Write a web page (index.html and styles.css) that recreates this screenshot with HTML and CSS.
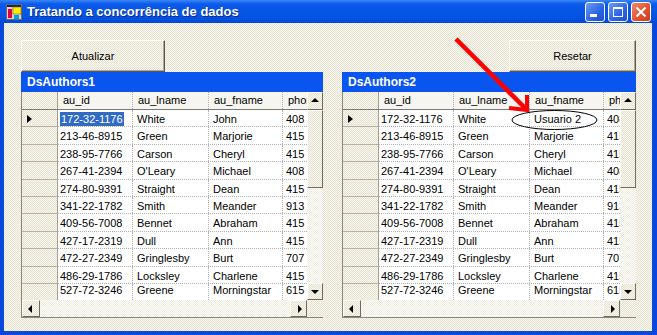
FILE: index.html
```html
<!DOCTYPE html>
<html lang="pt">
<head>
    <meta charset="UTF-8">
    <title>Tratando a concorrência de dados</title>
    <link rel="stylesheet" href="styles.css">
</head>
<body>
<div class="window">
    <!-- Barra de título -->
    <div class="titlebar">
        <svg class="app-icon" width="16" height="16" viewBox="0 0 16 16">
            <rect x="0.5" y="0.5" width="15" height="15" fill="#d8d4c8" stroke="#6b6b6b"/>
            <rect x="1" y="1" width="14" height="2" fill="#0a246a"/>
            <rect x="2" y="5" width="4" height="9" fill="#e0004a"/>
            <rect x="7" y="3" width="8" height="7" fill="#ffee00" stroke="#806000" stroke-width="0.6"/>
            <rect x="8" y="11" width="5" height="4" fill="#00a0e8"/>
        </svg>
        <span class="title">Tratando a concorrência de dados</span>
        <div class="caption-buttons">
            <span class="cap-btn">
                <svg width="20" height="20" viewBox="0 0 20 20"><rect x="5" y="12" width="7" height="3" fill="#fff"/></svg>
            </span>
            <span class="cap-btn">
                <svg width="20" height="20" viewBox="0 0 20 20"><rect x="5.5" y="5.5" width="9" height="9" fill="none" stroke="#fff"/><rect x="5" y="5" width="10" height="2" fill="#fff"/></svg>
            </span>
            <span class="cap-btn cap-close">
                <svg width="20" height="20" viewBox="0 0 20 20"><path d="M5.5 5.5 L14.5 14.5 M14.5 5.5 L5.5 14.5" stroke="#fff" stroke-width="2"/></svg>
            </span>
        </div>
    </div>

    <div class="client">
        <div class="toolbar">
            <button class="btn btn-update">Atualizar</button>
            <button class="btn btn-reset">Resetar</button>
        </div>

        <div class="grids">
            <!-- Primeiro DataGrid -->
            <div class="datagrid grid-left">
                <div class="grid-caption">DsAuthors1</div>
                <div class="grid-body">
                    <div class="grid-main">
                        <div class="grid-table">
                            <div class="grid-head">
                                <span class="cell c-rh"></span><span class="cell c-id">au_id</span><span class="cell c-ln">au_lname</span><span class="cell c-fn">au_fname</span><span class="cell c-ph">phone</span>
                            </div>
                            <div class="grid-rows">
                                <div class="grid-row"><span class="cell c-rh current"></span><span class="cell c-id"><span class="selected">172-32-1176</span></span><span class="cell c-ln">White</span><span class="cell c-fn">John</span><span class="cell c-ph">408</span></div>
                                <div class="grid-row"><span class="cell c-rh"></span><span class="cell c-id">213-46-8915</span><span class="cell c-ln">Green</span><span class="cell c-fn">Marjorie</span><span class="cell c-ph">415</span></div>
                                <div class="grid-row"><span class="cell c-rh"></span><span class="cell c-id">238-95-7766</span><span class="cell c-ln">Carson</span><span class="cell c-fn">Cheryl</span><span class="cell c-ph">415</span></div>
                                <div class="grid-row"><span class="cell c-rh"></span><span class="cell c-id">267-41-2394</span><span class="cell c-ln">O'Leary</span><span class="cell c-fn">Michael</span><span class="cell c-ph">408</span></div>
                                <div class="grid-row"><span class="cell c-rh"></span><span class="cell c-id">274-80-9391</span><span class="cell c-ln">Straight</span><span class="cell c-fn">Dean</span><span class="cell c-ph">415</span></div>
                                <div class="grid-row"><span class="cell c-rh"></span><span class="cell c-id">341-22-1782</span><span class="cell c-ln">Smith</span><span class="cell c-fn">Meander</span><span class="cell c-ph">913</span></div>
                                <div class="grid-row"><span class="cell c-rh"></span><span class="cell c-id">409-56-7008</span><span class="cell c-ln">Bennet</span><span class="cell c-fn">Abraham</span><span class="cell c-ph">415</span></div>
                                <div class="grid-row"><span class="cell c-rh"></span><span class="cell c-id">427-17-2319</span><span class="cell c-ln">Dull</span><span class="cell c-fn">Ann</span><span class="cell c-ph">415</span></div>
                                <div class="grid-row"><span class="cell c-rh"></span><span class="cell c-id">472-27-2349</span><span class="cell c-ln">Gringlesby</span><span class="cell c-fn">Burt</span><span class="cell c-ph">707</span></div>
                                <div class="grid-row"><span class="cell c-rh"></span><span class="cell c-id">486-29-1786</span><span class="cell c-ln">Locksley</span><span class="cell c-fn">Charlene</span><span class="cell c-ph">415</span></div>
                                <div class="grid-row"><span class="cell c-rh"></span><span class="cell c-id">527-72-3246</span><span class="cell c-ln">Greene</span><span class="cell c-fn">Morningstar</span><span class="cell c-ph">615</span></div>
                            </div>
                        </div>
                        <div class="vscroll">
                            <span class="sb-btn sb-up"></span>
                            <span class="sb-thumb"></span>
                            <span class="sb-track"></span>
                            <span class="sb-btn sb-down"></span>
                        </div>
                    </div>
                    <div class="hscroll">
                        <span class="sb-btn sb-left"></span>
                        <span class="sb-track"></span>
                        <span class="sb-btn sb-right"></span>
                        <span class="sb-corner"></span>
                    </div>
                </div>
            </div>

            <!-- Segundo DataGrid -->
            <div class="datagrid grid-right">
                <div class="grid-caption">DsAuthors2</div>
                <div class="grid-body">
                    <div class="grid-main">
                        <div class="grid-table">
                            <div class="grid-head">
                                <span class="cell c-rh"></span><span class="cell c-id">au_id</span><span class="cell c-ln">au_lname</span><span class="cell c-fn">au_fname</span><span class="cell c-ph">phone</span>
                            </div>
                            <div class="grid-rows">
                                <div class="grid-row"><span class="cell c-rh current"></span><span class="cell c-id">172-32-1176</span><span class="cell c-ln">White</span><span class="cell c-fn">Usuario 2</span><span class="cell c-ph">408</span></div>
                                <div class="grid-row"><span class="cell c-rh"></span><span class="cell c-id">213-46-8915</span><span class="cell c-ln">Green</span><span class="cell c-fn">Marjorie</span><span class="cell c-ph">415</span></div>
                                <div class="grid-row"><span class="cell c-rh"></span><span class="cell c-id">238-95-7766</span><span class="cell c-ln">Carson</span><span class="cell c-fn">Cheryl</span><span class="cell c-ph">415</span></div>
                                <div class="grid-row"><span class="cell c-rh"></span><span class="cell c-id">267-41-2394</span><span class="cell c-ln">O'Leary</span><span class="cell c-fn">Michael</span><span class="cell c-ph">408</span></div>
                                <div class="grid-row"><span class="cell c-rh"></span><span class="cell c-id">274-80-9391</span><span class="cell c-ln">Straight</span><span class="cell c-fn">Dean</span><span class="cell c-ph">415</span></div>
                                <div class="grid-row"><span class="cell c-rh"></span><span class="cell c-id">341-22-1782</span><span class="cell c-ln">Smith</span><span class="cell c-fn">Meander</span><span class="cell c-ph">913</span></div>
                                <div class="grid-row"><span class="cell c-rh"></span><span class="cell c-id">409-56-7008</span><span class="cell c-ln">Bennet</span><span class="cell c-fn">Abraham</span><span class="cell c-ph">415</span></div>
                                <div class="grid-row"><span class="cell c-rh"></span><span class="cell c-id">427-17-2319</span><span class="cell c-ln">Dull</span><span class="cell c-fn">Ann</span><span class="cell c-ph">415</span></div>
                                <div class="grid-row"><span class="cell c-rh"></span><span class="cell c-id">472-27-2349</span><span class="cell c-ln">Gringlesby</span><span class="cell c-fn">Burt</span><span class="cell c-ph">707</span></div>
                                <div class="grid-row"><span class="cell c-rh"></span><span class="cell c-id">486-29-1786</span><span class="cell c-ln">Locksley</span><span class="cell c-fn">Charlene</span><span class="cell c-ph">415</span></div>
                                <div class="grid-row"><span class="cell c-rh"></span><span class="cell c-id">527-72-3246</span><span class="cell c-ln">Greene</span><span class="cell c-fn">Morningstar</span><span class="cell c-ph">615</span></div>
                            </div>
                        </div>
                        <div class="vscroll">
                            <span class="sb-btn sb-up"></span>
                            <span class="sb-thumb"></span>
                            <span class="sb-track"></span>
                            <span class="sb-btn sb-down"></span>
                        </div>
                    </div>
                    <div class="hscroll">
                        <span class="sb-btn sb-left"></span>
                        <span class="sb-track"></span>
                        <span class="sb-btn sb-right"></span>
                        <span class="sb-corner"></span>
                    </div>
                </div>
            </div>
        </div>
    </div>

    <!-- Anotação: seta vermelha e elipse -->
    <svg class="annotation" width="657" height="335" viewBox="0 0 657 335">
        <line x1="456" y1="39" x2="525" y2="108" stroke="#ff0000" stroke-width="4.5"/>
        <polyline points="527,95 527,110 509,108" fill="none" stroke="#ff0000" stroke-width="4"/>
        <ellipse cx="554.5" cy="120" rx="42.5" ry="9.5" fill="none" stroke="#000" stroke-width="1"/>
    </svg>
</div>
</body>
</html>
```

FILE: styles.css
```css
body {
    margin: 0;
    font-family: "Liberation Sans", Arial, sans-serif;
    font-size: 11px;
    color: #000;
}
.window {
    position: relative;
    width: 657px;
    height: 335px;
    background-color: #0a48dc;
    display: flex;
    flex-direction: column;
    overflow: hidden;
}

/* Barra de título */
.titlebar {
    height: 23px;
    flex: none;
    display: flex;
    align-items: center;
    padding: 0 6px;
    background: linear-gradient(#3b86f5 0, #0b5ae9 4px, #0454e3 16px, #0349d8 23px);
    color: white;
}
.app-icon {
    flex: none;
}
.title {
    margin-left: 5px;
    font-size: 13px;
    font-weight: bold;
    text-shadow: 1px 1px 0 #0a2a8a;
}
.caption-buttons {
    margin-left: auto;
    display: flex;
    gap: 3px;
}
.cap-btn {
    width: 20px;
    height: 20px;
    box-sizing: border-box;
    border: 1px solid #fff;
    border-radius: 3px;
    background: linear-gradient(135deg, #6c9cf6, #2a64e6 60%, #1c4fd0);
    display: flex;
    align-items: center;
    justify-content: center;
    overflow: hidden;
}
.cap-btn svg {
    flex: none;
}
.cap-close {
    background: linear-gradient(135deg, #f0886a, #e0502e 60%, #c83c1c);
}

/* Área cliente */
.client {
    flex: 1;
    margin: 0 5px 4px 4px;
    padding: 17px 16px 0 17px;
    background: repeating-conic-gradient(#e6e2cd 0 25%, #f8f7f1 0 50%) 0 0 / 2px 2px;
}
.toolbar {
    display: flex;
    justify-content: space-between;
}
.btn {
    height: 32px;
    padding: 0;
    font-family: "Liberation Sans", Arial, sans-serif;
    font-size: 11px;
    color: #000;
    background: transparent;
    border: 1px solid;
    border-color: #fff #5c5a50 #5c5a50 #fff;
    box-shadow: inset -1px -1px 0 #aca899;
}
.btn-update {
    width: 144px;
}
.btn-reset {
    width: 127px;
}

/* DataGrids */
.grids {
    display: flex;
    gap: 19px;
}
.datagrid {
    height: 246px;
    display: flex;
    flex-direction: column;
}
.grid-left {
    width: 302px;
}
.grid-right {
    width: 294px;
}
.grid-caption {
    height: 20px;
    flex: none;
    box-sizing: border-box;
    padding: 3px 0 0 6px;
    background-color: #0a55f0;
    color: white;
    font-size: 12px;
    font-weight: bold;
}
.grid-body {
    flex: 1;
    display: flex;
    flex-direction: column;
    border-left: 1px solid #8a887c;
    border-bottom: 1px solid #8a887c;
}
.grid-main {
    display: flex;
    height: 208px;
}
.grid-table {
    flex: 1;
    min-width: 0;
    background-color: white;
}
.grid-head {
    display: flex;
    height: 17px;
    border-bottom: 1px solid #7a7a7a;
    background-color: #f6f5f0;
}
.grid-rows {
    height: 190px;
    overflow: hidden;
}
.grid-row {
    display: flex;
    height: 17.4px;
    box-sizing: border-box;
    border-bottom: 1px dotted #b2b2b2;
}
.cell {
    box-sizing: border-box;
    padding: 3px 0 0 4px;
    line-height: 13px;
    white-space: nowrap;
    overflow: hidden;
    border-right: 1px dotted #b2b2b2;
}
.grid-head .cell {
    padding: 2px 0 0 5px;
}
.grid-row:last-child .cell {
    padding-top: 0;
}
.c-rh {
    width: 36px;
    flex: none;
    position: relative;
    background: repeating-conic-gradient(#e6e2cd 0 25%, #f8f7f1 0 50%) 0 0 / 2px 2px;
    border-right: 1px solid #a3a091;
}
.grid-row .c-rh {
    border-bottom: 1px solid #b5b2a4;
    margin-bottom: -1px;
}
.c-id {
    width: 75px;
    flex: none;
}
.grid-row .c-id {
    padding-left: 2px;
}
.c-ln {
    width: 76px;
    flex: none;
}
.c-fn {
    width: 74px;
    flex: none;
}
.c-ph {
    flex: 1;
    min-width: 0;
    border-right: none;
    padding-left: 3px;
}
.selected {
    display: inline-block;
    padding: 0 1px;
    margin-top: -1px;
    line-height: 14px;
    background-color: #316ac5;
    color: white;
}
.current::after {
    content: "";
    position: absolute;
    left: 5px;
    top: 5px;
    border-left: 5px solid #000;
    border-top: 4px solid transparent;
    border-bottom: 4px solid transparent;
}

/* Barras de rolagem */
.vscroll {
    width: 16px;
    flex: none;
    display: flex;
    flex-direction: column;
}
.sb-btn {
    position: relative;
    box-sizing: border-box;
    border: 1px solid;
    border-color: #fff #6e6c62 #6e6c62 #fff;
    background: repeating-conic-gradient(#e6e2cd 0 25%, #f8f7f1 0 50%) 0 0 / 2px 2px;
}
.sb-btn::after {
    content: "";
    position: absolute;
    left: 50%;
    top: 50%;
    width: 0;
    height: 0;
}
.sb-up {
    height: 18px;
}
.sb-up::after {
    margin: -3px 0 0 -4px;
    border-bottom: 4px solid #000;
    border-left: 4px solid transparent;
    border-right: 4px solid transparent;
}
.sb-down {
    height: 17px;
}
.sb-down::after {
    margin: -2px 0 0 -4px;
    border-top: 4px solid #000;
    border-left: 4px solid transparent;
    border-right: 4px solid transparent;
}
.sb-thumb {
    height: 78px;
    box-sizing: border-box;
    border: 1px solid;
    border-color: #fff #6e6c62 #6e6c62 #fff;
    background: repeating-conic-gradient(#e6e2cd 0 25%, #f8f7f1 0 50%) 0 0 / 2px 2px;
}
.sb-track {
    flex: 1;
    background: repeating-conic-gradient(#efede2 0 25%, #fdfdfb 0 50%) 0 0 / 2px 2px;
}
.hscroll {
    height: 17px;
    display: flex;
}
.sb-left {
    width: 18px;
}
.sb-left::after {
    margin: -4px 0 0 -3px;
    border-right: 4px solid #000;
    border-top: 4px solid transparent;
    border-bottom: 4px solid transparent;
}
.sb-right {
    width: 17px;
}
.sb-right::after {
    margin: -4px 0 0 -1px;
    border-left: 4px solid #000;
    border-top: 4px solid transparent;
    border-bottom: 4px solid transparent;
}
.sb-corner {
    width: 16px;
    background: repeating-conic-gradient(#e6e2cd 0 25%, #f8f7f1 0 50%) 0 0 / 2px 2px;
}

/* Anotação desenhada por cima */
.annotation {
    position: absolute;
    left: 0;
    top: 0;
    pointer-events: none;
}
```
